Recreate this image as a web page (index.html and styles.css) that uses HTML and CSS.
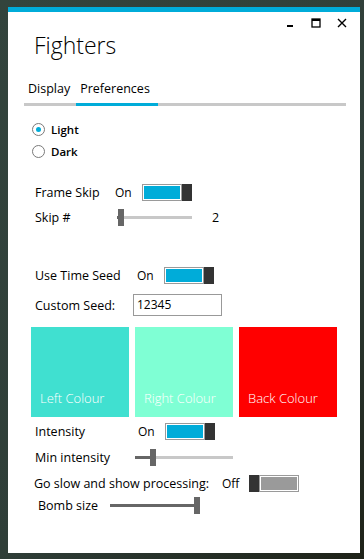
FILE: index.html
```html
<!DOCTYPE html>
<html>
<head>
<meta charset="utf-8">
<link rel="stylesheet" href="styles.css">
</head>
<body>
<div class="window">
  <div class="controls">
    <span class="ctl min"><svg width="10" height="10" viewBox="0 0 10 10"><rect x="2" y="7" width="6" height="2" fill="#000"/></svg></span>
    <span class="ctl max"><svg width="10" height="10" viewBox="0 0 10 10"><rect x="1" y="1" width="8" height="8" fill="none" stroke="#000" stroke-width="1.3"/><rect x="1" y="1" width="8" height="2" fill="#000"/></svg></span>
    <span class="ctl close"><svg width="10" height="10" viewBox="0 0 10 10"><path d="M1 1 L9 9 M9 1 L1 9" stroke="#000" stroke-width="1.4"/></svg></span>
  </div>
  <h1 class="title">Fighters</h1>
  <div class="tabs">
    <span class="tab">Display</span>
    <span class="tab active">Preferences</span>
  </div>
  <div class="tabbar"><span class="tabbar-active"></span></div>

  <div class="content">
    <div class="radio-group">
      <div class="radio-row"><span class="radio checked"></span><span class="radio-label">Light</span></div>
      <div class="radio-row"><span class="radio"></span><span class="radio-label">Dark</span></div>
    </div>

    <div class="row row-frame">
      <span class="label w-frame">Frame Skip</span>
      <span class="state">On</span>
      <span class="toggle on"><span class="track"><span class="fill"></span></span><span class="thumb"></span></span>
    </div>
    <div class="row row-skip">
      <span class="label w-skip">Skip #</span>
      <span class="slider s-skip"><span class="s-left"></span><span class="s-thumb"></span><span class="s-right"></span></span>
      <span class="value">2</span>
    </div>

    <div class="row row-seed">
      <span class="label w-seed">Use Time Seed</span>
      <span class="state">On</span>
      <span class="toggle on"><span class="track"><span class="fill"></span></span><span class="thumb"></span></span>
    </div>
    <div class="row row-custom">
      <span class="label w-custom">Custom Seed:</span>
      <span class="input">12345</span>
    </div>

    <div class="colours">
      <div class="colour c-left"><span>Left Colour</span></div>
      <div class="colour c-right"><span>Right Colour</span></div>
      <div class="colour c-back"><span>Back Colour</span></div>
    </div>

    <div class="row row-int">
      <span class="label w-int">Intensity</span>
      <span class="state">On</span>
      <span class="toggle on"><span class="track"><span class="fill"></span></span><span class="thumb"></span></span>
    </div>
    <div class="row row-min">
      <span class="label w-min">Min intensity</span>
      <span class="slider s-min"><span class="s-left"></span><span class="s-thumb"></span><span class="s-right"></span></span>
    </div>
    <div class="row row-slow">
      <span class="label w-slow">Go slow and show processing:</span>
      <span class="state">Off</span>
      <span class="toggle off"><span class="thumb"></span><span class="track"><span class="fill"></span></span></span>
    </div>
    <div class="row row-bomb">
      <span class="label w-bomb">Bomb size</span>
      <span class="slider s-bomb"><span class="s-left"></span><span class="s-thumb"></span></span>
    </div>
  </div>
</div>
</body>
</html>
```

FILE: styles.css
```css
html, body {
  margin: 0;
  padding: 0;
}
body {
  width: 364px;
  height: 559px;
  background: linear-gradient(135deg, #33443d 0%, #2f3e38 60%, #1e2218 100%);
  font-family: "Open Sans", "Noto Sans", sans-serif;
  color: #000;
  overflow: hidden;
  padding-top: 7px;
  box-sizing: border-box;
}
.window {
  margin-left: 8px;
  width: 352px;
  height: 546px;
  background: #fff;
  border-top: 5px solid #00acd9;
  box-sizing: border-box;
  position: relative;
}
.controls {
  position: absolute;
  top: 6px;
  right: 13px;
  display: flex;
  gap: 16px;
}
.ctl {
  display: block;
  width: 10px;
  height: 10px;
}
.ctl svg { display: block; }
.title {
  margin: 0;
  padding: 18px 0 0 26px;
  font-size: 23px;
  font-weight: 300;
  line-height: 30px;
  height: 30px;
}
.tabs {
  display: flex;
  margin-top: 19px;
  padding-left: 20px;
  height: 20px;
  font-size: 12.5px;
  line-height: 20px;
}
.tab { margin-right: 10px; }
.tabbar {
  margin: 4px 0 0 16px;
  width: 322px;
  height: 3px;
  background: #c8c8c8;
  display: flex;
}
.tabbar-active {
  display: block;
  margin-left: 52px;
  width: 82px;
  height: 3px;
  background: #00acd9;
}
.content {
  padding-left: 23px;
  font-size: 12.5px;
}
.radio-group {
  margin-top: 12px;
}
.radio-row {
  display: flex;
  align-items: center;
  height: 22px;
  margin-left: 1px;
}
.radio {
  width: 11px;
  height: 11px;
  border: 1px solid #7a7a7a;
  border-radius: 50%;
  box-sizing: content-box;
  position: relative;
  display: block;
}
.radio.checked::after {
  content: "";
  position: absolute;
  left: 3px;
  top: 3px;
  width: 5px;
  height: 5px;
  border-radius: 50%;
  background: #00acd9;
}
.radio-label {
  margin-left: 6px;
  font-weight: 600;
  font-size: 11.5px;
}
.row {
  display: flex;
  align-items: center;
  height: 22px;
}
.row > * { flex-shrink: 0; }
.label { display: block; }
.w-frame { width: 80px; margin-left: 4px; }
.w-skip { width: 82px; margin-left: 4px; }
.w-seed { width: 102px; margin-left: 4px; }
.w-custom { width: 98px; margin-left: 4px; }
.w-int { width: 103px; margin-left: 4px; }
.w-min { width: 100px; margin-left: 4px; }
.w-slow { width: 188px; margin-left: 3px; }
.w-bomb { width: 72px; margin-left: 7px; }
.state {
  display: block;
  width: 27px;
  font-size: 12px;
}
.toggle {
  display: flex;
  height: 17px;
  width: 50px;
}
.toggle .track {
  display: block;
  flex: 1;
  border: 1px solid #9a9a9a;
  padding: 1px;
  box-sizing: border-box;
}
.toggle .fill {
  display: block;
  height: 100%;
  background: #00acd9;
}
.toggle.off .fill { background: #9a9a9a; }
.toggle .thumb {
  display: block;
  width: 10px;
  background: #333;
}
.row-frame { margin-top: 19px; }
.row-skip { margin-top: 3px; }
.slider {
  display: flex;
  align-items: center;
  height: 17px;
}
.s-left {
  display: block;
  height: 3px;
  background: #666;
}
.s-right {
  display: block;
  height: 3px;
  background: #c8c8c8;
}
.s-thumb {
  display: block;
  width: 6px;
  height: 17px;
  background: #666;
}
.s-skip .s-left { width: 1px; }
.s-skip .s-right { width: 68px; }
.value { margin-left: 20px; }
.row-seed { margin-top: 36px; }
.row-custom { margin-top: 8px; }
.input {
  display: block;
  width: 89px;
  height: 22px;
  border: 1px solid #999;
  box-sizing: border-box;
  padding-left: 3px;
  line-height: 20px;
  font-size: 12px;
}
.colours {
  display: flex;
  gap: 6px;
  margin-top: 11px;
}
.colour {
  width: 98px;
  height: 90px;
  display: flex;
  align-items: flex-end;
  color: #fff;
  font-weight: 300;
  font-size: 13px;
}
.colour span {
  margin: 0 0 10px 9px;
}
.c-left { background: #40e0d0; }
.c-right { background: #7fffd4; }
.c-back { background: #ff0000; }
.row-int { margin-top: 3px; }
.s-min .s-left { width: 15px; }
.s-min .s-right { width: 77px; }
.row-min { margin-top: 4px; }
.row-slow { margin-top: 4px; }
.row-bomb { margin-top: 0; }
.s-bomb .s-left { width: 84px; }
```
